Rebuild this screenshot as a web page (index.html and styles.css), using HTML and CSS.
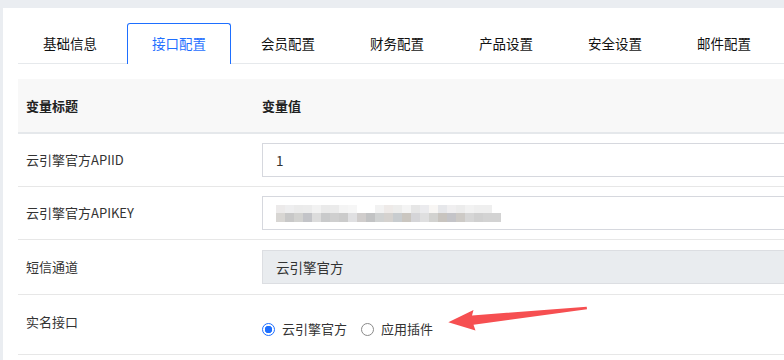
FILE: index.html
```html
<!DOCTYPE html>
<html lang="zh-CN">
<head>
    <meta charset="UTF-8">
    <meta name="viewport" content="width=device-width, initial-scale=1.0">
    <title>接口配置</title>
    <link rel="stylesheet" href="styles.css">
</head>
<body>
    <div class="card">
        <div class="tabs">
            <div class="tab">基础信息</div>
            <div class="tab active">接口配置</div>
            <div class="tab">会员配置</div>
            <div class="tab">财务配置</div>
            <div class="tab">产品设置</div>
            <div class="tab">安全设置</div>
            <div class="tab">邮件配置</div>
        </div>

        <table class="config">
            <thead>
                <tr>
                    <th class="col-title">变量标题</th>
                    <th>变量值</th>
                </tr>
            </thead>
            <tbody>
                <tr>
                    <td>云引擎官方APIID</td>
                    <td><div class="input">1</div></td>
                </tr>
                <tr>
                    <td>云引擎官方APIKEY</td>
                    <td>
                        <div class="input">
                            <div class="blur">
                                <div class="blur-top"></div>
                                <div class="blur-bottom"></div>
                            </div>
                        </div>
                    </td>
                </tr>
                <tr class="tall-row">
                    <td>短信通道</td>
                    <td><div class="input disabled">云引擎官方</div></td>
                </tr>
                <tr class="radio-row">
                    <td class="label-top">实名接口</td>
                    <td>
                        <div class="radios">
                            <label class="radio"><span class="dot checked"></span>云引擎官方</label>
                            <label class="radio"><span class="dot"></span>应用插件</label>
                        </div>
                    </td>
                </tr>
            </tbody>
        </table>
    </div>

    <!-- annotation arrow -->
    <svg class="arrow" width="784" height="360" viewBox="0 0 784 360">
        <polygon points="448.3,322.3 473.5,310 472,315.5 586.7,306.8 587,309.3 473.5,324.8 475.5,330.5" fill="#f64f51"/>
    </svg>
</body>
</html>
```

FILE: styles.css
```css
html, body {
    margin: 0;
    height: 100%;
    overflow: hidden;
}

body {
    background-color: #eaedf1;
    padding: 8px 0 0 3px;
    font-family: "Noto Sans CJK SC", "Noto Sans", sans-serif;
    font-size: 13px;
    color: #333;
    position: relative;
    box-sizing: border-box;
}

.card {
    background-color: #fff;
    width: 1000px;
    height: 100%;
    padding: 15px 15px 0 15px;
    box-sizing: border-box;
}

.tabs {
    display: flex;
    border-bottom: 1px solid #e6e9ec;
    height: 40px;
}

.tab {
    width: 104px;
    height: 40px;
    margin-right: 5px;
    line-height: 39px;
    text-align: center;
    font-size: 13.5px;
    color: #111;
    box-sizing: border-box;
    border: 1px solid transparent;
    border-bottom: none;
}

.tab.active {
    border-color: #1e6fff;
    border-radius: 3px 3px 0 0;
    color: #1e6fff;
    background-color: #fff;
    height: 41px;
}

.config {
    margin-top: 15px;
    width: 900px;
    border-collapse: collapse;
}

.config th {
    background-color: #f8f8f8;
    text-align: left;
    font-weight: 600;
    color: #222;
    padding: 17px 8px 16px 8px;
    line-height: 20px;
    border-bottom: 2px solid #e5e8eb;
}

.config .col-title {
    width: 220px;
}

.config td {
    padding: 9px 8px 9px 8px;
    line-height: 20px;
    border-bottom: 1px solid #e7e7e7;
    vertical-align: middle;
}

.config .tall-row td {
    padding: 10px 8px 10px 8px;
}

.input {
    height: 34px;
    box-sizing: border-box;
    border: 1px solid #d6d8de;
    padding: 0 13px;
    line-height: 32px;
    color: #333;
    font-size: 13.5px;
    display: flex;
    align-items: center;
}

.input.disabled {
    background-color: #e9ecef;
    border-color: #dcdee2;
}

.blur {
    width: 225px;
}

.blur-top {
    height: 8px;
    width: 216px;
    background: linear-gradient(to right,
        #eceaea 0 9px, #eeeeef 9px 18px, #ebebeb 18px 27px, #ececec 27px 36px,
        #f2f2f2 36px 45px, #eaeaea 45px 54px, #ebebeb 54px 63px, #f4f4f4 63px 72px,
        #f6f6f6 72px 81px, #fff 81px 99px, #f2f2f2 99px 108px, #eeeae8 108px 117px,
        #ededec 117px 126px, #f4f4f4 126px 135px, #e6e6e6 135px 144px, #ebebee 144px 153px,
        #f8f6f4 153px 162px, #e6e7ea 162px 171px, #f0eff0 171px 180px, #ececec 180px 189px,
        #f2f2f2 189px 198px, #efefef 198px 216px);
}

.blur-bottom {
    height: 9px;
    background: linear-gradient(to right,
        #d8d6d3 0 9px, #c8c8c8 9px 18px, #d2d2d0 18px 27px, #c3c4c8 27px 36px,
        #dcdcdc 36px 45px, #c9cacb 45px 54px, #cfcfcf 54px 63px, #cbcbcb 63px 72px,
        #e0e0e2 72px 81px, #d0cdcc 81px 90px, #c2c3c4 90px 99px, #d0d2d2 99px 108px,
        #d5d2cf 108px 117px, #c8cccf 117px 126px, #cac6c0 126px 135px, #d5d5d8 135px 144px,
        #dfdfe0 144px 153px, #d2d2d0 153px 162px, #c8c4bf 162px 171px, #c4c4c8 171px 180px,
        #cdcac6 180px 189px, #d6d6d6 189px 198px, #d0d0d0 198px 207px, #d3d3d3 207px 225px);
}

.radio-row td {
    padding: 24px 8px 15px 8px;
}

.radio-row .label-top {
    padding: 17px 8px 22px 8px;
    vertical-align: top;
}

.radios {
    display: flex;
    align-items: center;
    gap: 14px;
}

.radio {
    display: flex;
    align-items: center;
    gap: 7px;
    font-size: 13px;
    color: #333;
}

.dot {
    width: 13px;
    height: 13px;
    border-radius: 50%;
    border: 1px solid #8a8a8a;
    box-sizing: border-box;
    background-color: #fff;
}

.dot.checked {
    border-color: #1e6fff;
    background: radial-gradient(circle, #1e6fff 0 3.5px, #fff 4px);
}

.arrow {
    position: absolute;
    left: 0;
    top: 0;
    pointer-events: none;
}
```
